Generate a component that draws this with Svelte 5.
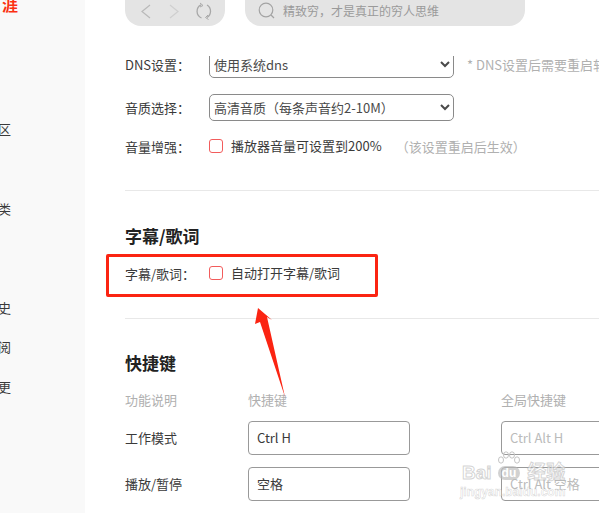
<script>
  const navItems = [
    { text: '涯', cls: 'first' },
    { text: '区', cls: 'qu' },
    { text: '类', cls: 'lei' },
    { text: '史', cls: 'shi' },
    { text: '阅', cls: 'yue' },
    { text: '更', cls: 'geng' }
  ];
  const keys = [
    { name: '工作模式', key: 'Ctrl H', global: 'Ctrl Alt H' },
    { name: '播放/暂停', key: '空格', global: 'Ctrl Alt 空格' }
  ];
</script>

<div class="page">
  <aside class="side">
    {#each navItems as item}
      <div class="nav {item.cls}">{item.text}</div>
    {/each}
  </aside>

  <main class="main">
    <header class="top">
      <div class="pill">
        <svg width="100" height="36" viewBox="0 0 100 36" fill="none">
          <path d="M25 11 L17 17.500 L25 24" stroke="#b9b9b9" stroke-width="1.2"/>
          <path d="M45 11 L53 17.500 L45 24" stroke="#cfcfcf" stroke-width="1.2"/>
          <path d="M76 10.800 A7.300 7.300 0 0 0 76.500 24 M82 11 A7.300 7.300 0 0 1 82 23.500" stroke="#a8a8a8" stroke-width="1.3"/>
          <path d="M75 9 L78 11.500 L75 13 M83 21 L80.500 23.500 L83.500 25.500" stroke="#a8a8a8" stroke-width="1"/>
        </svg>
      </div>
      <div class="search">
        <svg width="20" height="20" viewBox="0 0 20 20" fill="none">
          <circle cx="9" cy="9" r="6.800" stroke="#a3a3a3" stroke-width="1.200"/>
          <path d="M14 14 L17 17" stroke="#a3a3a3" stroke-width="1.200"/>
        </svg>
        <span>精致穷，才是真正的穷人思维</span>
      </div>
    </header>

    <section class="sec first-sec">
      <div class="row dns">
        <span class="label">DNS设置：</span>
        <select class="sel"><option>使用系统dns</option></select>
        <span class="hint dnshint">* DNS设置后需要重启软件</span>
      </div>
      <div class="row quality">
        <span class="label">音质选择：</span>
        <select class="sel"><option>高清音质（每条声音约2-10M）</option></select>
      </div>
      <div class="row volume">
        <span class="label">音量增强：</span>
        <span class="check"></span>
        <span class="ctext">播放器音量可设置到200%</span>
        <span class="hint volhint">（该设置重启后生效）</span>
      </div>
    </section>

    <section class="sec lyrics">
      <h2>字幕/歌词</h2>
      <div class="row lyricrow">
        <span class="label">字幕/歌词：</span>
        <span class="check"></span>
        <span class="ctext">自动打开字幕/歌词</span>
      </div>
    </section>

    <section class="sec keys">
      <h2>快捷键</h2>
      <div class="grid heads">
        <span>功能说明</span><span>快捷键</span><span>全局快捷键</span>
      </div>
      {#each keys as k}
        <div class="grid keyrow">
          <span class="kname">{k.name}</span>
          <div class="input">{k.key}</div>
          <div class="input global">{k.global}</div>
        </div>
      {/each}
    </section>
  </main>

  <div class="redbox"></div>
  <svg class="arrow" width="40" height="96" viewBox="0 0 40 96">
    <path d="M8 2 L22 14 L17 11 L35 91 L10 16 L5 18 Z" fill="#fb2412"/>
  </svg>
  <div class="mark">
    <svg class="paw" width="24" height="13" viewBox="0 0 24 13" fill="none">
      <ellipse cx="4" cy="9" rx="2.500" ry="3.200" stroke="#c4c4c4" stroke-width="1"/>
      <ellipse cx="9" cy="4" rx="2.500" ry="3.200" stroke="#c4c4c4" stroke-width="1"/>
      <ellipse cx="15" cy="4" rx="2.500" ry="3.200" stroke="#c4c4c4" stroke-width="1"/>
      <ellipse cx="20" cy="9" rx="2.500" ry="3.200" stroke="#c4c4c4" stroke-width="1"/>
    </svg>
    <div class="markmain"><span>Bai</span><span class="du">du</span><span class="jy">经验</span></div>
    <div class="marksub">jingyan.baidu.com</div>
  </div>
</div>

<style>
  :global(body) {
    margin: 0;
    background: #fff;
  }
  .page {
    position: relative;
    display: flex;
    width: 599px;
    height: 513px;
    overflow: hidden;
    font-family: "Noto Sans CJK SC", "Noto Sans", sans-serif;
    color: #3a3a3a;
    font-size: 13px;
  }
  .side {
    flex: 0 0 85px;
    background: #f9f9f9;
    display: flex;
    flex-direction: column;
    overflow: hidden;
  }
  .nav {
    font-size: 13px;
    line-height: 20px;
    color: #3a3a3a;
    margin-left: -2px;
  }
  .nav.first { color: #fb3012; font-weight: 700; font-size: 16px; margin-left: 2px; margin-top: -6px; }
  .nav.qu { margin-top: 105px; }
  .nav.lei { margin-top: 60px; }
  .nav.shi { margin-top: 79px; }
  .nav.yue { margin-top: 19px; }
  .nav.geng { margin-top: 20px; }

  .main {
    position: relative;
    flex: 1;
    min-width: 0;
    padding-left: 40px;
    padding-top: 51px;
  }
  .top {
    position: absolute;
    left: 0;
    right: 0;
    top: 0;
    height: 56px;
    background: #fff;
    z-index: 2;
    padding-left: 40px;
    display: flex;
    gap: 20px;
    box-sizing: border-box;
  }
  .pill {
    width: 100px;
    height: 26px;
    background: #e4e4e4;
    overflow: hidden;
    border-radius: 0 0 16px 16px;
  }
  .pill svg { display: block; margin-top: -6px; }
  .search {
    width: 280px;
    height: 26px;
    background: #e4e4e4;
    border-radius: 0 0 16px 16px;
    display: flex;
    align-items: center;
    gap: 6px;
    padding-left: 12px;
    box-sizing: border-box;
    color: #9a9a9a;
    font-size: 12px;
  }
  .search svg { margin-top: -4px; flex: none; }
  .search span { margin-top: -6px; }

  .row { display: flex; align-items: center; white-space: nowrap; }
  .label { flex: 0 0 84px; }
  .sel {
    width: 245px;
    height: 27px;
    border: 1px solid #8a8a8a;
    border-radius: 5px;
    background: #fff;
    color: #4a4a4a;
    font: 13px "Noto Sans CJK SC", sans-serif;
    padding-left: 0;
    flex: none;
  }
  .dns { height: 27px; }
  .quality { height: 27px; margin-top: 16px; }
  .volume { height: 20px; margin-top: 15px; }
  .hint { color: #b0b0b0; }
  .dnshint { margin-left: 13px; }
  .volhint { margin-left: 14px; }
  .check {
    width: 12px;
    height: 12px;
    border: 1px solid #f25c5c;
    border-radius: 3px;
    flex: none;
    margin-right: 8px;
  }
  .ctext { margin-top: -2px; }

  .sec.first-sec { padding-bottom: 34px; border-bottom: 1px solid #e8e8e8; }
  h2 {
    margin: 0;
    font-size: 17px;
    line-height: 24px;
    font-weight: 700;
    color: #222;
  }
  .lyrics { padding-top: 33px; padding-bottom: 35px; border-bottom: 1px solid #e8e8e8; }
  .lyricrow { margin-top: 15px; height: 20px; }
  .keys { padding-top: 32px; }
  .grid {
    display: grid;
    grid-template-columns: 123px 253px 200px;
    align-items: center;
  }
  .heads { margin-top: 14px; color: #b0b0b0; font-size: 13px; height: 20px; }
  .keyrow { height: 34px; margin-top: 12px; }
  .kname { margin-top: -2px; }
  .input {
    box-sizing: border-box;
    width: 162px;
    height: 34px;
    border: 1px solid #999;
    border-radius: 4px;
    line-height: 32px;
    padding-left: 8px;
    color: #3a3a3a;
  }
  .input.global { color: #bbb; width: 200px; }

  .redbox {
    position: absolute;
    left: 106px;
    top: 254px;
    width: 266px;
    height: 37px;
    border: 3px solid #fb2412;
    border-radius: 2px;
  }
  .arrow { position: absolute; left: 250px; top: 306px; }
  .mark {
    position: absolute;
    left: 460px;
    top: 451px;
    z-index: 3;
    width: 110px;
    font-family: "Liberation Sans", "Noto Sans CJK SC", sans-serif;
  }
  .paw { display: block; margin-left: 37px; }
  .markmain {
    display: flex;
    align-items: center;
    white-space: nowrap;
    font-size: 19px;
    line-height: 20px;
    font-weight: 700;
    color: rgba(255, 255, 255, 0.6);
    -webkit-text-stroke: 1px rgba(175, 175, 175, 0.55);
    margin-left: 2px;
    margin-top: -1px;
  }
  .du {
    font-size: 12px;
    line-height: 14px;
    margin-left: 6px;
    background: rgba(185, 185, 185, 0.65);
    color: #fff;
    -webkit-text-stroke: 0;
    border-radius: 7px;
    padding: 0 4px;
  }
  .jy { margin-left: 7px; }
  .marksub {
    font-size: 12px;
    line-height: 14px;
    font-weight: 700;
    white-space: nowrap;
    color: rgba(255, 255, 255, 0.6);
    -webkit-text-stroke: 0.5px rgba(175, 175, 175, 0.55);
    margin-top: 2px;
  }
</style>
